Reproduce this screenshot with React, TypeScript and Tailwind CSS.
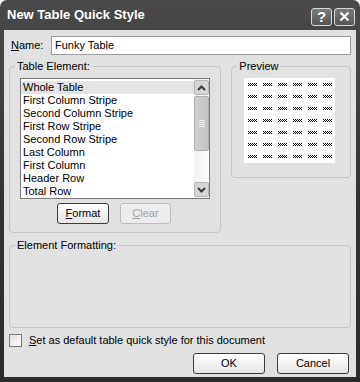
import React from 'react'

const ELEMENTS = [
  'Whole Table',
  'First Column Stripe',
  'Second Column Stripe',
  'First Row Stripe',
  'Second Row Stripe',
  'Last Column',
  'First Column',
  'Header Row',
  'Total Row',
]

const font = { fontFamily: '"Liberation Sans", Arial, sans-serif' }

function Chevron({ up }: { up?: boolean }) {
  return (
    <svg width="9" height="6" viewBox="0 0 9 6">
      <path
        d={up ? 'M1 5 L4.5 1.5 L8 5' : 'M1 1 L4.5 4.5 L8 1'}
        fill="none"
        stroke="#3a3a3a"
        strokeWidth="2"
      />
    </svg>
  )
}

function Dash() {
  // tiny checkered "xxx" marker like the Office preview
  const cells: React.ReactElement[] = []
  for (let y = 0; y < 3; y++) {
    for (let x = 0; x < 9; x++) {
      if ((x + y) % 2 === 0) cells.push(<rect key={`${x}-${y}`} x={x} y={y} width="1" height="1" fill="#000" />)
    }
  }
  return (
    <svg width="9" height="3" viewBox="0 0 9 3" shapeRendering="crispEdges">
      {cells}
    </svg>
  )
}

function XpButton({ children, disabled }: { children: React.ReactNode; disabled?: boolean }) {
  return (
    <button
      type="button"
      disabled={disabled}
      className={`flex flex-1 items-center justify-center rounded-[3px] border text-[11px] ${
        disabled
          ? 'border-[#bdbdbd] bg-[#ececec] text-[#a3a3a3]'
          : 'border-[#3b3b3b] bg-gradient-to-b from-white to-[#e6e6e6] text-black'
      }`}
    >
      {children}
    </button>
  )
}

function Group({ label, className, children }: { label: string; className: string; children?: React.ReactNode }) {
  return (
    <fieldset className={`rounded-[4px] border border-[#c6c6c6] ${className}`}>
      <legend className="ml-[5px] px-[2px] text-[11px] leading-[13px]">{label}</legend>
      {children}
    </fieldset>
  )
}

export default function App() {
  return (
    <div
      style={font}
      className="flex h-[382px] w-[360px] flex-col rounded-t-[7px] bg-gradient-to-b from-[#4a4a4a] via-[#333333] to-[#2b2b2b] text-black"
    >
      <div className="flex h-[30px] shrink-0 items-center justify-between pl-[7px] pr-[5px]">
        <span className="text-[13px] font-bold text-white">New Table Quick Style</span>
        <div className="flex gap-[2px] pt-[3px]">
          <div className="flex h-[18px] w-[21px] items-center justify-center rounded-[3px] border border-[#d8d8d8] bg-gradient-to-b from-[#7a7a7a] to-[#555555] text-[15px] font-bold leading-none text-white">
            ?
          </div>
          <div className="flex h-[18px] w-[21px] items-center justify-center rounded-[3px] border border-[#d8d8d8] bg-gradient-to-b from-[#7a7a7a] to-[#555555]">
            <svg width="11" height="11" viewBox="0 0 11 11">
              <path d="M1.5 1.5 L9.5 9.5 M9.5 1.5 L1.5 9.5" stroke="white" strokeWidth="2.2" />
            </svg>
          </div>
        </div>
      </div>

      <div className="mx-[4px] mb-[5px] flex flex-1 flex-col bg-[#e1e1e1] pl-[5px] pr-[5px] text-[11px]">
        <div className="mt-[6px] flex h-[19px] items-center">
          <span className="w-[42px] pl-[2px]">
            <u>N</u>ame:
          </span>
          <div className="flex h-[19px] flex-1 items-center border border-[#9c9c9c] bg-white pl-[3px]">Funky Table</div>
        </div>

        <div className="mt-[5px] flex gap-[10px]">
          <Group label="Table Element:" className="h-[173px] w-[213px]">
            <div className="px-[10px] pt-[5px]">
              <div className="flex h-[121px] border border-[#7a7a7a] bg-white">
                <div className="flex-1 pt-[2px] leading-[13px]">
                  {ELEMENTS.map((e, i) => (
                    <div key={e} className={`h-[13px] pl-[2px] ${i === 0 ? 'bg-[#e4e4e4]' : ''}`}>
                      {e}
                    </div>
                  ))}
                </div>
                <div className="flex w-[15px] flex-col bg-gradient-to-r from-[#f3f3f3] to-[#fbfbfb] py-[1px]">
                  <div className="flex h-[15px] items-center justify-center rounded-[2px] border border-[#b5b5b5] bg-[#d6d6d6]">
                    <Chevron up />
                  </div>
                  <div className="mt-px flex h-[55px] items-center justify-center rounded-[2px] border border-[#b0b0b0] bg-gradient-to-r from-[#cfcfcf] to-[#c4c4c4]">
                    <div className="flex flex-col gap-[1px]">
                      <div className="h-px w-[6px] bg-[#efefef]" />
                      <div className="h-px w-[6px] bg-[#efefef]" />
                      <div className="h-px w-[6px] bg-[#efefef]" />
                      <div className="h-px w-[6px] bg-[#efefef]" />
                    </div>
                  </div>
                  <div className="flex-1" />
                  <div className="flex h-[15px] items-center justify-center rounded-[2px] border border-[#b5b5b5] bg-[#d6d6d6]">
                    <Chevron />
                  </div>
                </div>
              </div>
              <div className="mt-[4px] flex h-[21px] gap-[11px] pl-[37px]">
                <div className="flex w-[52px]">
                  <XpButton>
                    <span>
                      <u>F</u>ormat
                    </span>
                  </XpButton>
                </div>
                <div className="flex w-[51px]">
                  <XpButton disabled>
                    <span>
                      <u>C</u>lear
                    </span>
                  </XpButton>
                </div>
              </div>
            </div>
          </Group>

          <Group label="Preview" className="h-[118px] w-[120px]">
            <div className="pl-[12px] pt-[5px]">
              <div className="grid h-[85px] w-[91px] grid-cols-[repeat(6,15px)] content-start gap-y-[9px] bg-white pl-[4px] pt-[5px]">
                {Array.from({ length: 42 }).map((_, i) => (
                  <div key={i} className="flex h-[3px] items-start">
                    <Dash />
                  </div>
                ))}
              </div>
            </div>
          </Group>
        </div>

        <Group label="Element Formatting:" className="mt-[6px] h-[89px] w-[342px]" />

        <div className="mt-[5px] flex h-[14px] items-center gap-[7px]">
          <div className="h-[13px] w-[13px] border border-[#7a7a7a] bg-gradient-to-br from-[#e0e0e0] to-white" />
          <span>
            <u>S</u>et as default table quick style for this document
          </span>
        </div>

        <div className="mt-[6px] flex justify-end gap-[12px] pr-[2px]">
          <div className="flex h-[21px] w-[72px]">
            <XpButton>OK</XpButton>
          </div>
          <div className="flex h-[21px] w-[72px]">
            <XpButton>Cancel</XpButton>
          </div>
        </div>
      </div>
    </div>
  )
}
